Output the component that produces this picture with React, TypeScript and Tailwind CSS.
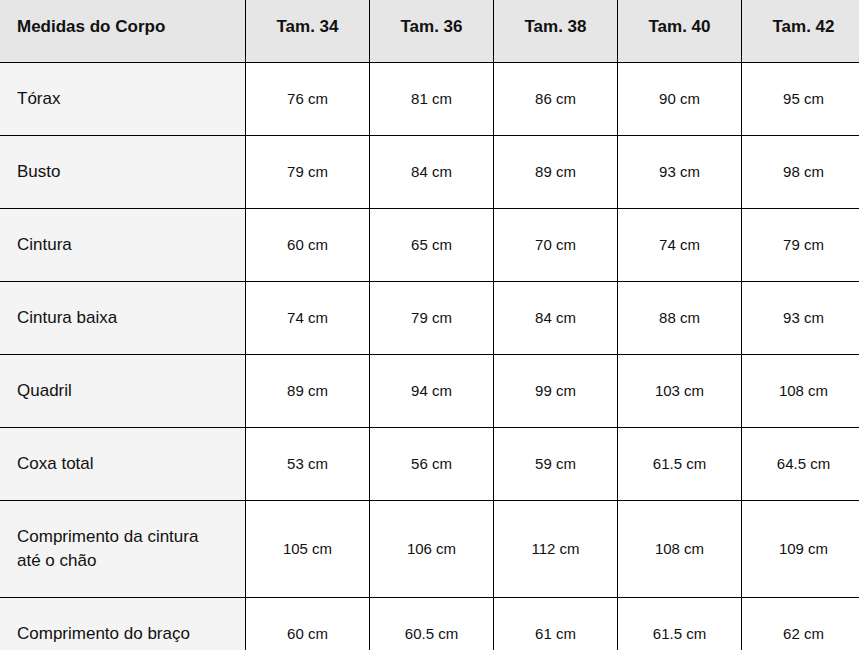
import React from "react";

const sizes = ["Tam. 34", "Tam. 36", "Tam. 38", "Tam. 40", "Tam. 42"];

const rows = [
  { label: "Tórax", values: ["76 cm", "81 cm", "86 cm", "90 cm", "95 cm"] },
  { label: "Busto", values: ["79 cm", "84 cm", "89 cm", "93 cm", "98 cm"] },
  { label: "Cintura", values: ["60 cm", "65 cm", "70 cm", "74 cm", "79 cm"] },
  { label: "Cintura baixa", values: ["74 cm", "79 cm", "84 cm", "88 cm", "93 cm"] },
  { label: "Quadril", values: ["89 cm", "94 cm", "99 cm", "103 cm", "108 cm"] },
  { label: "Coxa total", values: ["53 cm", "56 cm", "59 cm", "61.5 cm", "64.5 cm"] },
  {
    label: "Comprimento da cintura até o chão",
    values: ["105 cm", "106 cm", "112 cm", "108 cm", "109 cm"],
    tall: true,
  },
  { label: "Comprimento do braço", values: ["60 cm", "60.5 cm", "61 cm", "61.5 cm", "62 cm"] },
];

export default function App() {
  return (
    <div className="w-[859px] h-[650px] overflow-hidden bg-white text-[#111] font-['Liberation_Sans',Arial,sans-serif]">
      <div className="grid w-[865px] grid-cols-[245px_repeat(5,124px)]">
        {/* header */}
        <div className="h-[63px] border-b border-black bg-[#e6e6e6] pl-[17px] pb-[9px] flex items-center text-[17px] font-bold">
          Medidas do Corpo
        </div>
        {sizes.map((s) => (
          <div
            key={s}
            className="h-[63px] border-b border-l border-black bg-[#e6e6e6] pb-[9px] flex items-center justify-center text-[17px] font-bold"
          >
            {s}
          </div>
        ))}

        {rows.map((row) => (
          <React.Fragment key={row.label}>
            <div
              className={`${row.tall ? "h-[97px]" : "h-[73px]"} border-b border-black bg-[#f4f4f4] pl-[17px] pr-4 flex items-center text-[17px] leading-[24px]`}
            >
              <span className={row.tall ? "w-[205px]" : ""}>{row.label}</span>
            </div>
            {row.values.map((v, i) => (
              <div
                key={i}
                className={`${row.tall ? "h-[97px]" : "h-[73px]"} border-b border-l border-black flex items-center justify-center text-[15px]`}
              >
                {v}
              </div>
            ))}
          </React.Fragment>
        ))}
      </div>
    </div>
  );
}
